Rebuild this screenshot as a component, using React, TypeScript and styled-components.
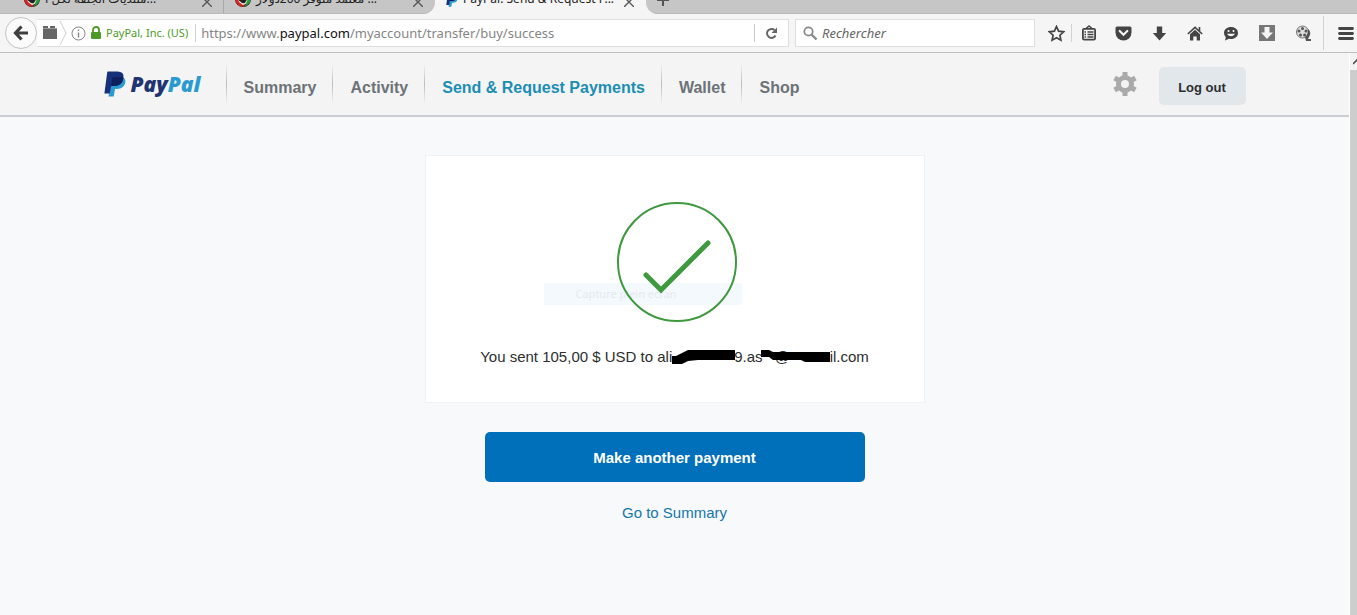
import React from "react";
import styled, { createGlobalStyle } from "styled-components";

const GlobalStyle = createGlobalStyle`
  * { box-sizing: border-box; }
  html, body { margin: 0; height: 100%; }
  #root { height: 100%; }
  button, input { font: inherit; margin: 0; }
`;

const Window = styled.div`
  display: flex;
  flex-direction: column;
  min-height: 100%;
  background: #f7f9fb;
  font-family: "Liberation Sans", Arial, sans-serif;
`;

/* ---------- browser chrome ---------- */
const TabStrip = styled.div`
  display: flex;
  flex: none;
  height: 14px;
  overflow: hidden;
  background: #f5f5f5;
  font: 12px/16px "Noto Sans", "DejaVu Sans", sans-serif;
  color: #222;
`;

const IdleTabs = styled.div`
  display: flex;
  background: #c6c6c6;
  border-bottom: 1px solid #bababa;
  border-radius: 0 0 12px 0;
`;

const Tab = styled.div<{ $divided?: boolean; $wide?: boolean }>`
  display: flex;
  align-items: flex-end;
  flex: none;
  width: ${(p) => (p.$wide ? 224 : 211)}px;
  height: 13px;
  gap: 4px;
  padding: 0 11px 6px ${(p) => (p.$wide ? 23 : 10)}px;
  border-right: 1px solid ${(p) => (p.$divided ? "#a9a9a9" : "transparent")};
  svg { display: block; flex: none; }
`;

const TabTitle = styled.span`
  flex: 1;
  white-space: nowrap;
`;

const PlainButton = styled.button`
  display: flex;
  align-items: center;
  justify-content: center;
  padding: 0;
  border: 0;
  background: none;
  color: #444;
`;

const StripEnd = styled.div`
  display: flex;
  align-items: flex-end;
  flex: 1;
  padding: 0 0 6px 10px;
  background: #c6c6c6;
  border-bottom: 1px solid #bababa;
  border-radius: 0 0 0 12px;
`;

const Toolbar = styled.div`
  display: flex;
  align-items: center;
  height: 39px;
  padding-left: 5px;
  background: #f5f5f5;
  border-bottom: 1px solid #bfbfbf;
  font: 13px/18px "Noto Sans", "Open Sans", sans-serif;
`;

const BackButton = styled(PlainButton)`
  flex: none;
  width: 32px;
  height: 32px;
  border: 1px solid #c4c4c4;
  border-radius: 50%;
  background: #fbfbfb;
`;

const AddressBar = styled.div`
  display: flex;
  align-items: center;
  flex: 1;
  height: 28px;
  margin-right: 6px;
  background: #fff;
  border: 1px solid #dedede;
  border-left: 0;
`;

const Identity = styled.div`
  display: flex;
  align-items: center;
  gap: 4px;
  height: 18px;
  padding-right: 7px;
  border-right: 1px solid #d0d0d0;
  color: #4d9a28;
  font-size: 11px;
  white-space: nowrap;
`;

const Url = styled.div`
  flex: 1;
  padding-left: 5px;
  color: #858585;
  white-space: nowrap;
  b { color: #111; font-weight: 400; }
`;

const Reload = styled(PlainButton)`
  width: 34px;
  height: 18px;
  border-left: 1px solid #ccc;
`;

const SearchBox = styled.label`
  display: flex;
  align-items: center;
  flex: 0 0 240px;
  height: 28px;
  padding-left: 7px;
  gap: 4px;
  background: #fff;
  border: 1px solid #dedede;
  input {
    flex: 1;
    min-width: 0;
    border: 0;
    padding: 0;
    outline: 0;
    background: none;
  }
  input::placeholder { color: #666; font-style: italic; opacity: 1; }
`;

const Tools = styled.div`
  display: flex;
  align-items: center;
  margin-left: 6px;
`;

const Tool = styled(PlainButton)<{ $width?: number }>`
  width: ${(p) => p.$width ?? 36}px;
  height: 28px;
`;

const MenuButton = styled(PlainButton)`
  width: 33px;
  height: 28px;
  padding-left: 10px;
`;

const Divider = styled.span<{ $tall?: boolean }>`
  width: 1px;
  height: ${(p) => (p.$tall ? 34 : 18)}px;
  margin-left: ${(p) => (p.$tall ? 2 : 0)}px;
  background: #d2d2d2;
`;

/* ---------- page ---------- */
const Viewport = styled.div`
  display: flex;
  flex: 1;
`;

const Page = styled.div`
  flex: 1;
  min-width: 0;
`;

const Scrollbar = styled.div`
  display: flex;
  flex-direction: column;
  width: 8px;
  background: #fff;
  padding-left: 1px;
  overflow: hidden;
`;

const ScrollArrow = styled.div`
  height: 17px;
  padding: 6px 0 0 3px;
  background: #f3f3f3;
  svg { display: block; }
`;

const ScrollThumb = styled.div`
  flex: 1;
  background: #cdcdcd;
`;

const Header = styled.header`
  background: #f4f4f4;
  border-bottom: 2px solid #cacdd1;
`;

const HeaderInner = styled.div`
  display: flex;
  align-items: center;
  max-width: 1142px;
  height: 62px;
  margin: 0 auto;
`;

const Brand = styled.a`
  display: flex;
  align-items: center;
  gap: 5px;
  width: 122px;
  font: italic 800 21px/26px "Open Sans", sans-serif;
  color: #203471;
  text-decoration: none;
  em { color: #2a9bd0; }
`;

const Nav = styled.nav`
  display: flex;
  flex: 1;
`;

const NavLink = styled.a<{ $active?: boolean }>`
  padding: 15px 16px 7px 17px;
  border-left: 1px solid;
  border-image: linear-gradient(#f4f4f4, #bdbdbd, #f4f4f4) 1;
  font-weight: 700;
  font-size: 16px;
  line-height: 18px;
  white-space: nowrap;
  text-decoration: none;
  color: ${(p) => (p.$active ? "#1b8eb4" : "#6c7378")};
`;

const Settings = styled(PlainButton)`
  width: 24px;
  height: 24px;
  margin-right: 22px;
`;

const LogOut = styled.button`
  width: 87px;
  height: 38px;
  margin-top: 4px;
  padding: 2px 0 0;
  border: 0;
  border-radius: 5px;
  background: #e1e7eb;
  color: #2c2e2f;
  font-weight: 700;
  font-size: 13px;
`;

const Main = styled.main`
  display: flex;
  flex-direction: column;
  align-items: center;
  padding: 38px 16px 24px;
`;

const Card = styled.section`
  position: relative;
  display: flex;
  flex-direction: column;
  align-items: center;
  width: 100%;
  max-width: 500px;
  padding: 45px 16px 35px;
  background: #fff;
  border: 1px solid #eef1f5;
`;

const SuccessMark = styled.svg`
  z-index: 1;
`;

const Message = styled.p`
  display: flex;
  margin: 24px 0 0;
  color: #2c2e2f;
  font-size: 15px;
  line-height: 20px;
  white-space: pre;
`;

const Redacted = styled.span<{ $width: number }>`
  position: relative;
  width: ${(p) => p.$width}px;
  padding-left: 12px;
  svg { position: absolute; left: 0; top: 0; overflow: visible; }
`;

const CaptureHint = styled.div`
  position: absolute;
  left: 118px;
  top: 127px;
  width: 198px;
  padding-left: 32px;
  background: #f4f9fe;
  color: #e4e9ef;
  font: 11px/22px "Noto Sans", sans-serif;
  white-space: nowrap;
`;

const PrimaryButton = styled.button`
  width: 100%;
  max-width: 380px;
  height: 50px;
  margin-top: 29px;
  border: 0;
  border-radius: 5px;
  background: #0070ba;
  color: #fff;
  font-weight: 700;
  font-size: 15px;
`;

const SummaryLink = styled.a`
  margin-top: 21px;
  color: #1576ad;
  font-size: 15px;
  line-height: 20px;
  text-decoration: none;
`;

const CloseIcon = () => (
  <svg width="10" height="10" viewBox="0 0 10 10" stroke="#555" strokeWidth="1.4" fill="none">
    <path d="M0 0 10 10M10 0 0 10" />
  </svg>
);

const ForumIcon = () => (
  <svg width="18" height="16" viewBox="0 0 18 16">
    <circle cx="9" cy="8" r="8" fill="#222" />
    <path d="M1 7a8 8 0 0 0 9 8.500l1-2.500-5-2-2-4Z" fill="#d52525" />
    <path d="M4 7c3 0 3 6 6 5s3-6 5-6l-1 6-5 2-4-3Z" fill="#e9f3e5" />
    <path d="M16.500 5c1.500 5-1.500 9-6.500 10.500 3-2.500 2-6.500 6.500-10.500Z" fill="#2d9b3a" />
    <path d="M5 9c2 0 3 4 6 2" fill="none" stroke="#222" strokeWidth="1.6" />
  </svg>
);

const PayPalMark = ({ width, height }: { width: number; height: number }) => (
  <svg width={width} height={height} viewBox="0 0 22 26">
    <path d="M8 6h10.500q3.500 1.500 2.800 5.500-1.300 6.500-8.300 6.500h-2l-1.300 7.500H4.500Z" fill="#2a9bd0" />
    <path d="M4 0.500h9.500q6.700 0 6 6-1 8.500-9.500 8.500H7.200L5.600 22.500H0.400L3.200 1.500Q3.300 0.500 4 0.500Z" fill="#16307a" />
    <path d="M8.500 6h8q2.300 0 2.900 1.200-1.300 7.800-9.400 7.800H7.200Z" fill="#0e1f5e" />
  </svg>
);

export default function App() {
  return (
    <Window>
      <GlobalStyle />
      <TabStrip>
        <IdleTabs>
          <Tab $wide $divided>
            <ForumIcon />
            <TabTitle>منتديات الجلفة لكل ا...</TabTitle>
            <PlainButton aria-label="Close tab"><CloseIcon /></PlainButton>
          </Tab>
          <Tab>
            <ForumIcon />
            <TabTitle>معتمد متوفر 200دولار ...</TabTitle>
            <PlainButton aria-label="Close tab"><CloseIcon /></PlainButton>
          </Tab>
        </IdleTabs>
        <Tab>
          <PayPalMark width={14} height={14} />
          <TabTitle>PayPal: Send &amp; Request P...</TabTitle>
          <PlainButton aria-label="Close tab"><CloseIcon /></PlainButton>
        </Tab>
        <StripEnd>
          <PlainButton aria-label="New tab">
            <svg width="14" height="14" viewBox="0 0 14 14" stroke="#555" strokeWidth="2"><path d="M7 1v12M1 7h12" /></svg>
          </PlainButton>
        </StripEnd>
      </TabStrip>

      <Toolbar>
        <BackButton aria-label="Back">
          <svg width="16" height="16" viewBox="0 0 16 16" fill="none" stroke="#3f3f3f" strokeWidth="3.200"><path d="M8.500 1.500 2.500 8l6 6.500M3 8h12" /></svg>
        </BackButton>
        <AddressBar>
          <Identity>
            <svg width="30" height="26" viewBox="0 0 30 26">
              <path d="M6 8V6h5v2h2V6h5v2h2v11H6Z" fill="#666" />
              <path d="M6 8.500h14" stroke="#999" />
              <path d="M23 1l6 12-6 12" fill="none" stroke="#cfcfcf" />
            </svg>
            <svg width="15" height="15" viewBox="0 0 15 15" fill="none" stroke="#858585"><circle cx="7.500" cy="7.500" r="6.500" /><path d="M7.500 6.500v5M7.500 3.500v1.500" strokeWidth="1.400" /></svg>
            <svg width="12" height="14" viewBox="0 0 12 14"><path d="M3 6V4a3 3 0 0 1 6 0v2" fill="none" stroke="#4d9a28" strokeWidth="1.800" /><rect x="1" y="6" width="10" height="7" rx="1" fill="#4d9a28" /></svg>
            PayPal, Inc. (US)
          </Identity>
          <Url>https://www.<b>paypal.com</b>/myaccount/transfer/buy/success</Url>
          <Reload aria-label="Reload">
            <svg width="13" height="13" viewBox="0 0 13 13"><path d="M10.500 8.500A4.500 4.500 0 1 1 9.500 3" fill="none" stroke="#666" strokeWidth="2" /><path d="M12 0.500V6H6.500Z" fill="#666" /></svg>
          </Reload>
        </AddressBar>
        <SearchBox>
          <svg width="15" height="15" viewBox="0 0 15 15" fill="none" stroke="#8a8a8a"><circle cx="5.500" cy="5.500" r="4.200" strokeWidth="1.800" /><path d="m8.500 8.500 5 5" strokeWidth="2.400" /></svg>
          <input type="text" placeholder="Rechercher" aria-label="Rechercher" />
        </SearchBox>
        <Tools>
          <Tool $width={30} aria-label="Bookmark">
            <svg width="17" height="17" viewBox="0 0 17 17" fill="none" stroke="#444" strokeWidth="1.700"><path d="m8.500 1.500 2.100 4.700 5 .6-3.700 3.400 1 5-4.400-2.500-4.400 2.500 1-5L1.400 6.800l5-.6Z" /></svg>
          </Tool>
          <Divider />
          <Tool $width={33} aria-label="Reading list">
            <svg width="16" height="16" viewBox="0 0 16 16"><path d="M5 3.500 8 1l3 2.500" fill="none" stroke="#444" strokeWidth="1.500" /><rect x="1.900" y="3.900" width="12.200" height="10.700" rx="1.300" fill="none" stroke="#444" strokeWidth="1.800" /><path d="M3.500 7H5M6.500 7h6M3.500 9.500H5M6.500 9.500h6M3.500 12H5M6.500 12h6" stroke="#444" strokeWidth="1.300" /></svg>
          </Tool>
          <Tool aria-label="Pocket">
            <svg width="17" height="15" viewBox="0 0 17 15"><path d="M2 .5h13q1.500 0 1.500 1.500v4.500a8 8 0 0 1-16 0V2Q.5.500 2 .5Z" fill="#444" /><path d="m4.700 5 3.800 3.700L12.300 5" fill="none" stroke="#f5f5f5" strokeWidth="2.200" strokeLinecap="round" /></svg>
          </Tool>
          <Tool aria-label="Downloads">
            <svg width="15" height="15" viewBox="0 0 15 15"><path d="M4.800.5h5.400V7h4L7.500 14.500.8 7h4Z" fill="#444" /></svg>
          </Tool>
          <Tool aria-label="Home">
            <svg width="16" height="15" viewBox="0 0 16 15"><path d="M.8 8 8 1.300 15.200 8M12.500 1v4" fill="none" stroke="#444" strokeWidth="1.600" /><path d="M3 8.300 8 3.800l5 4.500v6.200H9.700v-4H6.300v4H3Z" fill="#444" /></svg>
          </Tool>
          <Tool aria-label="Chat">
            <svg width="16" height="15" viewBox="0 0 16 15"><path d="M8 1c4 0 7 2.400 7 6s-3 6-7 6q-1 0-2-.2L2 14.500l.8-3.200Q1 9.700 1 7c0-3.600 3-6 7-6Z" fill="#444" /><path d="M5.500 4v2M10.500 4v2" stroke="#f5f5f5" strokeWidth="1.600" /><path d="M3.800 7.700q4.200 5 8.400 0Z" fill="#f5f5f5" /></svg>
          </Tool>
          <Tool aria-label="Video download">
            <svg width="16" height="16" viewBox="0 0 16 16"><path d="M0 0h16v16H0Z" fill="#777" /><path d="M5.500 2h5v5.500H14L8 14 2 7.500h3.500Z" fill="#f5f5f5" /></svg>
          </Tool>
          <Tool aria-label="Film">
            <svg width="17" height="17" viewBox="0 0 17 17"><circle cx="7.500" cy="7" r="6" fill="#ddd" stroke="#777" /><g fill="#555"><circle cx="7.500" cy="3.500" r="1.500" /><circle cx="4" cy="6" r="1.500" /><circle cx="5.500" cy="10" r="1.500" /><circle cx="9.600" cy="10" r="1.500" /><circle cx="11" cy="6" r="1.500" /></g><path d="M13 4q3 2 2 6l-2 4h3v2H11l-1-4q3-2 3-8Z" fill="#555" /></svg>
          </Tool>
          <Divider $tall />
          <MenuButton aria-label="Menu">
            <svg width="16" height="13" viewBox="0 0 16 13" stroke="#444" strokeWidth="2.800" strokeLinecap="round"><path d="M1.500 1.500h13M1.500 6.500h13M1.500 11.500h13" /></svg>
          </MenuButton>
        </Tools>
      </Toolbar>

      <Viewport>
        <Page>
          <Header>
            <HeaderInner>
              <Brand href="#" aria-label="PayPal">
                <PayPalMark width={22} height={26} />
                <span>Pay<em>Pal</em></span>
              </Brand>
              <Nav>
                <NavLink href="#">Summary</NavLink>
                <NavLink href="#">Activity</NavLink>
                <NavLink href="#" $active>Send &amp; Request Payments</NavLink>
                <NavLink href="#">Wallet</NavLink>
                <NavLink href="#">Shop</NavLink>
              </Nav>
              <Settings aria-label="Settings">
                <svg width="24" height="24" viewBox="0 0 24 24" fill="none" stroke="#aaa">
                  <circle cx="12" cy="12" r="6.500" strokeWidth="5" />
                  <path d="M12 0v4M12 20v4M1.600 6l3.500 2M18.900 16l3.500 2M1.600 18l3.500-2M18.900 8l3.500-2" strokeWidth="5" />
                </svg>
              </Settings>
              <LogOut>Log out</LogOut>
            </HeaderInner>
          </Header>
          <Main>
            <Card>
              <CaptureHint>Capture plein ecran</CaptureHint>
              <SuccessMark width="124" height="122" viewBox="0 0 124 122" fill="none" stroke="#3f9a3f">
                <circle cx="64" cy="61" r="59" strokeWidth="2" />
                <path d="m33 74 15 15 47-47" strokeWidth="5" strokeLinecap="round" />
              </SuccessMark>
              <Message>
                You sent 105,00 $ USD to ali
                <Redacted $width={62}>
                  <svg width="66" height="20" viewBox="0 0 66 20"><path d="M0 9h4l12-6h47v10H26l-10 1-6 3H0Z" fill="#000" /></svg>
                </Redacted>
                9.as
                <Redacted $width={67}>
                  @
                  <svg width="68" height="20" viewBox="0 0 68 20"><path d="M-2 3h8l4 2h57v10H42l-4-2H10l-4-3h-8Z" fill="#000" /></svg>
                </Redacted>
                il.com
              </Message>
            </Card>
            <PrimaryButton>Make another payment</PrimaryButton>
            <SummaryLink href="#">Go to Summary</SummaryLink>
          </Main>
        </Page>
        <Scrollbar>
          <ScrollArrow>
            <svg width="8" height="6" viewBox="0 0 8 6" fill="none" stroke="#555" strokeWidth="1.600"><path d="m0 5 4-4 4 4" /></svg>
          </ScrollArrow>
          <ScrollThumb />
        </Scrollbar>
      </Viewport>
    </Window>
  );
}
